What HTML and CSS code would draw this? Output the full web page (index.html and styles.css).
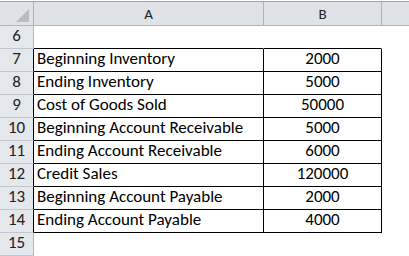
FILE: index.html
```html
<!DOCTYPE html>
<html>
<head>
<meta charset="utf-8">
<link rel="stylesheet" href="styles.css">
</head>
<body>
<div class="sheet">
  <div class="hdr">
    <div class="rh corner"><span class="tri"></span></div>
    <div class="a h">A</div>
    <div class="b h">B</div>
    <div class="c h"></div>
  </div>
  <div class="row">
    <div class="rh">6</div>
    <div class="a blank"></div>
    <div class="b blank"></div>
    <div class="c"></div>
  </div>
  <div class="row t">
    <div class="rh">7</div>
    <div class="a">Beginning Inventory</div>
    <div class="b">2000</div>
    <div class="c"></div>
  </div>
  <div class="row t">
    <div class="rh">8</div>
    <div class="a">Ending Inventory</div>
    <div class="b">5000</div>
    <div class="c"></div>
  </div>
  <div class="row t">
    <div class="rh">9</div>
    <div class="a">Cost of Goods Sold</div>
    <div class="b">50000</div>
    <div class="c"></div>
  </div>
  <div class="row t">
    <div class="rh">10</div>
    <div class="a">Beginning Account Receivable</div>
    <div class="b">5000</div>
    <div class="c"></div>
  </div>
  <div class="row t">
    <div class="rh">11</div>
    <div class="a">Ending Account Receivable</div>
    <div class="b">6000</div>
    <div class="c"></div>
  </div>
  <div class="row t">
    <div class="rh">12</div>
    <div class="a">Credit Sales</div>
    <div class="b">120000</div>
    <div class="c"></div>
  </div>
  <div class="row t">
    <div class="rh">13</div>
    <div class="a">Beginning Account Payable</div>
    <div class="b">2000</div>
    <div class="c"></div>
  </div>
  <div class="row t">
    <div class="rh">14</div>
    <div class="a">Ending Account Payable</div>
    <div class="b">4000</div>
    <div class="c"></div>
  </div>
  <div class="row last">
    <div class="rh">15</div>
    <div class="a"></div>
    <div class="b"></div>
    <div class="c"></div>
  </div>
</div>
</body>
</html>
```

FILE: styles.css
```css
html, body {
  margin: 0;
  padding: 0;
  background: #ffffff;
}
body {
  font-family: Carlito, Lato, "Noto Sans", sans-serif;
  font-size: 17px;
  color: #000;
}
.sheet {
  padding-top: 1px;
  width: 409px;
}
.hdr {
  display: flex;
  border-top: 1px solid #9da2a8;
  background: #dfe3e8;
}
.hdr > div {
  box-sizing: border-box;
  height: 24px;
  border-bottom: 1px solid #afb4ba;
  border-right: 1px solid #afb4ba;
  text-align: center;
  color: #222;
  font-size: 15px;
  line-height: 20px;
  padding-top: 2px;
}
.hdr > .c { border-right: none; }
.corner { position: relative; }
.tri {
  position: absolute;
  right: 4px;
  bottom: 3px;
  width: 0;
  height: 0;
  border-left: 13px solid transparent;
  border-bottom: 13px solid #b9bcc1;
}
.rh { width: 34px; flex: none; }
.a { width: 230px; flex: none; }
.b { width: 118px; flex: none; }
.c { flex: 1; }
.row {
  display: flex;
  height: 23px;
}
.row > div {
  box-sizing: border-box;
  height: 23px;
  line-height: 20px;
  padding-top: 0;
  white-space: nowrap;
}
.row > .rh {
  background: #e4e7eb;
  border-right: 1px solid #b3b8be;
  border-bottom: 1px solid #c3c7cc;
  text-align: center;
  color: #222;
}
.row > .a, .row > .b {
  border-right: 1px solid transparent;
  border-bottom: 1px solid transparent;
}
.row > .a.blank, .row > .b.blank,
.row.t > .a, .row.t > .b {
  border-bottom-color: #000;
}
.row.t > .rh { border-right-color: #000; }
.row.t > .a, .row.t > .b { border-right-color: #000; }
.row > .a { padding-left: 3px; }
.row > .b { text-align: center; }
```
